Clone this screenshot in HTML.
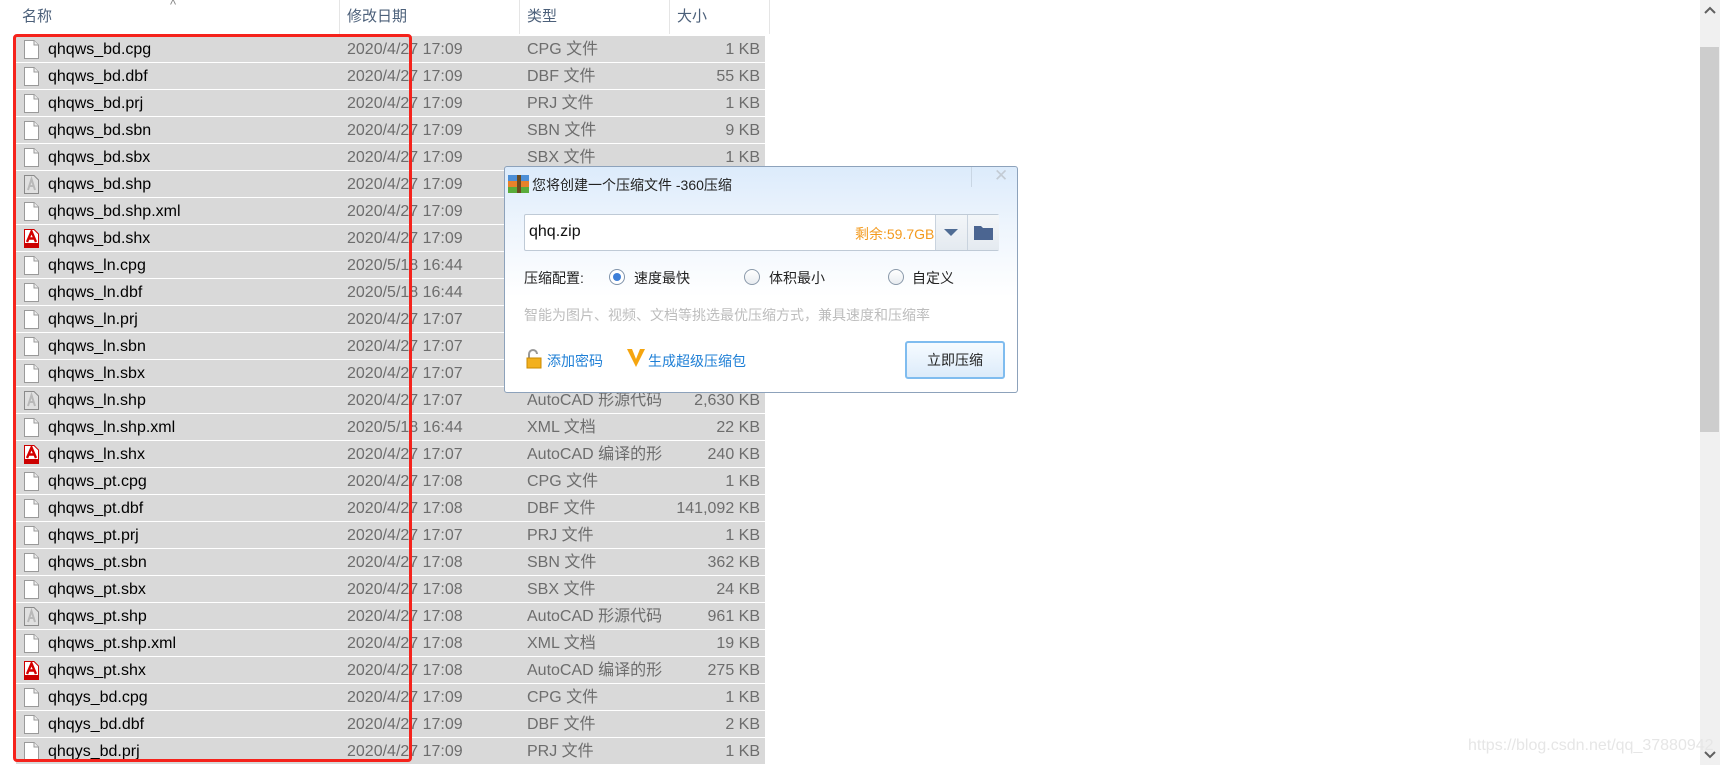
<!DOCTYPE html>
<html><head><meta charset="utf-8"><style>
*{margin:0;padding:0;box-sizing:border-box}
body{width:1720px;height:765px;overflow:hidden;background:#fff;position:relative;font-family:"Liberation Sans","Noto Sans CJK SC",sans-serif;font-size:15px;color:#1a1a1a}
.a{position:absolute;white-space:nowrap}
.hd{position:absolute;top:0;height:34px;line-height:34px;font-size:15px;color:#4c607a;padding-left:8px}
.row{position:absolute;left:16px;width:749px;height:26px;background:#d9d9d9;line-height:27px;font-size:16px}
.row span{position:absolute;white-space:nowrap}
.n{left:32px;color:#000}
.d{left:331px;color:#6d6d6d}
.t{left:511px;color:#6d6d6d}
.s{right:5px;color:#6d6d6d}
.ic{position:absolute;left:8px;top:4px;width:15px;height:19px}
</style></head><body>
<div class="hd" style="left:14px;width:325px">名称</div>
<div class="a" style="left:170px;top:-3px;color:#888;font-size:13px">^</div>
<div class="a" style="left:339px;top:0;width:1px;height:34px;background:#e5e5e5"></div>
<div class="hd" style="left:339px">修改日期</div>
<div class="a" style="left:519px;top:0;width:1px;height:34px;background:#e5e5e5"></div>
<div class="hd" style="left:519px">类型</div>
<div class="a" style="left:669px;top:0;width:1px;height:34px;background:#e5e5e5"></div>
<div class="hd" style="left:669px">大小</div>
<div class="a" style="left:769px;top:0;width:1px;height:34px;background:#e5e5e5"></div>

<div id="rows"></div>

<div class="a" style="left:13px;top:34px;width:399px;height:728px;border:3px solid #f5231c;border-radius:4px"></div>

<div class="a" style="left:1700px;top:0;width:20px;height:765px;background:#f0f0f0"></div>
<div class="a" style="left:1700px;top:47px;width:19px;height:385px;background:#cdcdcd"></div>
<svg class="a" style="left:1703px;top:5px" width="14" height="10"><path d="M2 8 L7 3 L12 8" stroke="#606060" stroke-width="2" fill="none"/></svg>
<svg class="a" style="left:1703px;top:750px" width="14" height="10"><path d="M2 2 L7 7 L12 2" stroke="#606060" stroke-width="2" fill="none"/></svg>
<div class="a" style="left:1468px;top:737px;font-size:16px;color:#e6e6e6">https://blog.csdn.net/qq_37880942</div>

<div class="a" style="left:504px;top:166px;width:514px;height:227px;border:1px solid #8da2bb;border-radius:3px;background:linear-gradient(#dcebfb 0,#eef5fd 60px,#fff 130px,#fff 100%)">
 <div class="a" style="left:466px;top:0;width:1px;height:20px;background:#c9d6e4"></div>
 <div class="a" style="left:489px;top:-1px;color:#c3cbd4;font-size:17px">✕</div>
 <svg class="a" style="left:3px;top:8px" width="21" height="18"><rect x="0" y="0" width="21" height="6" fill="#4d8fd6"/><rect x="0" y="6" width="21" height="6" fill="#e8822a"/><rect x="0" y="12" width="21" height="6" fill="#5aac3a"/><rect x="9" y="0" width="4" height="18" fill="#6b4a1e"/></svg>
 <div class="a" style="left:27px;top:8px;font-size:14px;color:#222">您将创建一个压缩文件 -360压缩</div>
 <div class="a" style="left:19px;top:47px;width:475px;height:37px;border:1px solid #bfcad6;background:#fff;border-radius:2px">
  <div class="a" style="left:4px;top:8px;font-size:16px;color:#111">qhq.zip</div>
  <div class="a" style="left:330px;top:9px;font-size:14px;color:#f39a1e">剩余:59.7GB</div>
  <div class="a" style="left:410px;top:0;width:32px;height:35px;border-left:1px solid #c9d3de;background:linear-gradient(#f3f6f9,#e4eaf0)"></div>
  <svg class="a" style="left:419px;top:14px" width="14" height="8"><path d="M0 0 H14 L7 7Z" fill="#4f6c94"/></svg>
  <div class="a" style="left:442px;top:0;width:32px;height:35px;border-left:1px solid #c9d3de;background:linear-gradient(#f3f6f9,#e4eaf0)"></div>
  <svg class="a" style="left:449px;top:10px" width="19" height="15"><path d="M0 1 H7 L9 3 H19 V15 H0Z" fill="#4b6591"/></svg>
 </div>
 <div class="a" style="left:19px;top:101px;font-size:14px;color:#222">压缩配置:</div>
 <div class="a" style="left:104px;top:102px;width:16px;height:16px;border:1px solid #8194ab;border-radius:50%;background:#fff"><div class="a" style="left:3px;top:3px;width:8px;height:8px;border-radius:50%;background:#3e7fd8"></div></div>
 <div class="a" style="left:129px;top:101px;font-size:14px;color:#222">速度最快</div>
 <div class="a" style="left:239px;top:102px;width:16px;height:16px;border:1px solid #8b9aab;border-radius:50%;background:linear-gradient(#fff,#e8ecf0)"></div>
 <div class="a" style="left:264px;top:101px;font-size:14px;color:#222">体积最小</div>
 <div class="a" style="left:383px;top:102px;width:16px;height:16px;border:1px solid #8b9aab;border-radius:50%;background:linear-gradient(#fff,#e8ecf0)"></div>
 <div class="a" style="left:407px;top:101px;font-size:14px;color:#222">自定义</div>
 <div class="a" style="left:19px;top:138px;font-size:14px;color:#bdbdbd">智能为图片、视频、文档等挑选最优压缩方式，兼具速度和压缩率</div>
 <svg class="a" style="left:21px;top:182px" width="16" height="20"><path d="M3 9 V5 A4 4 0 0 1 11 5" stroke="#999" stroke-width="2" fill="none"/><rect x="1" y="9" width="14" height="10" fill="#f2b01e" stroke="#c98a00"/></svg>
 <div class="a" style="left:42px;top:184px;font-size:14px;color:#1e7fd6">添加密码</div>
 <svg class="a" style="left:121px;top:181px" width="20" height="20"><path d="M1 1 L10 19 L19 1 H14 L10 11 L6 1Z" fill="#f5a50f"/></svg>
 <div class="a" style="left:143px;top:184px;font-size:14px;color:#1e7fd6">生成超级压缩包</div>
 <div class="a" style="left:400px;top:174px;width:100px;height:38px;border:2px solid #7fbcef;border-radius:3px;background:linear-gradient(#f6fbff,#dcebfa);text-align:center;line-height:34px;font-size:14px;color:#222">立即压缩</div>
</div>

<script>
var R=[["qhqws_bd.cpg","2020/4/27 17:09","CPG 文件","1 KB",0],["qhqws_bd.dbf","2020/4/27 17:09","DBF 文件","55 KB",0],["qhqws_bd.prj","2020/4/27 17:09","PRJ 文件","1 KB",0],["qhqws_bd.sbn","2020/4/27 17:09","SBN 文件","9 KB",0],["qhqws_bd.sbx","2020/4/27 17:09","SBX 文件","1 KB",0],["qhqws_bd.shp","2020/4/27 17:09","AutoCAD 形源代码","1 KB",1],["qhqws_bd.shp.xml","2020/4/27 17:09","XML 文档","1 KB",0],["qhqws_bd.shx","2020/4/27 17:09","AutoCAD 编译的形","1 KB",2],["qhqws_ln.cpg","2020/5/18 16:44","CPG 文件","1 KB",0],["qhqws_ln.dbf","2020/5/18 16:44","DBF 文件","1 KB",0],["qhqws_ln.prj","2020/4/27 17:07","PRJ 文件","1 KB",0],["qhqws_ln.sbn","2020/4/27 17:07","SBN 文件","1 KB",0],["qhqws_ln.sbx","2020/4/27 17:07","SBX 文件","1 KB",0],["qhqws_ln.shp","2020/4/27 17:07","AutoCAD 形源代码","2,630 KB",1],["qhqws_ln.shp.xml","2020/5/18 16:44","XML 文档","22 KB",0],["qhqws_ln.shx","2020/4/27 17:07","AutoCAD 编译的形","240 KB",2],["qhqws_pt.cpg","2020/4/27 17:08","CPG 文件","1 KB",0],["qhqws_pt.dbf","2020/4/27 17:08","DBF 文件","141,092 KB",0],["qhqws_pt.prj","2020/4/27 17:07","PRJ 文件","1 KB",0],["qhqws_pt.sbn","2020/4/27 17:08","SBN 文件","362 KB",0],["qhqws_pt.sbx","2020/4/27 17:08","SBX 文件","24 KB",0],["qhqws_pt.shp","2020/4/27 17:08","AutoCAD 形源代码","961 KB",1],["qhqws_pt.shp.xml","2020/4/27 17:08","XML 文档","19 KB",0],["qhqws_pt.shx","2020/4/27 17:08","AutoCAD 编译的形","275 KB",2],["qhqys_bd.cpg","2020/4/27 17:09","CPG 文件","1 KB",0],["qhqys_bd.dbf","2020/4/27 17:09","DBF 文件","2 KB",0],["qhqys_bd.prj","2020/4/27 17:09","PRJ 文件","1 KB",0]];
var ic=['<svg class="ic" viewBox="0 0 15 19"><path d="M0.5 0.5 H10 L14.5 5 V18.5 H0.5Z" fill="#fff" stroke="#9a9a9a"/><path d="M10 0.5 V5 H14.5" fill="#eee" stroke="#9a9a9a"/></svg>',
'<svg class="ic" viewBox="0 0 15 19"><path d="M0.5 0.5 H10 L14.5 5 V18.5 H0.5Z" fill="#e0e0e0" stroke="#8a8a8a"/><path d="M4 15 L7.5 4 L11 15 M5 11 H10" stroke="#b8b8b8" stroke-width="2" fill="none"/></svg>',
'<svg class="ic" viewBox="0 0 15 19"><path d="M0.5 0.5 H10 L14.5 5 V18.5 H0.5Z" fill="#fff" stroke="#c00"/><path d="M3 13 L7.5 2.5 L12 13 M4.5 9.5 H10.5" stroke="#d40000" stroke-width="2.4" fill="none"/><rect x="1" y="14" width="13" height="4" fill="#c00"/></svg>'];
var h='';R.forEach(function(r,i){h+='<div class="row" style="top:'+(36+i*27)+'px">'+ic[r[4]]+'<span class="n">'+r[0]+'</span><span class="d">'+r[1]+'</span><span class="t">'+r[2]+'</span><span class="s">'+r[3]+'</span></div>';});
document.getElementById('rows').innerHTML=h;
</script>
</body></html>
